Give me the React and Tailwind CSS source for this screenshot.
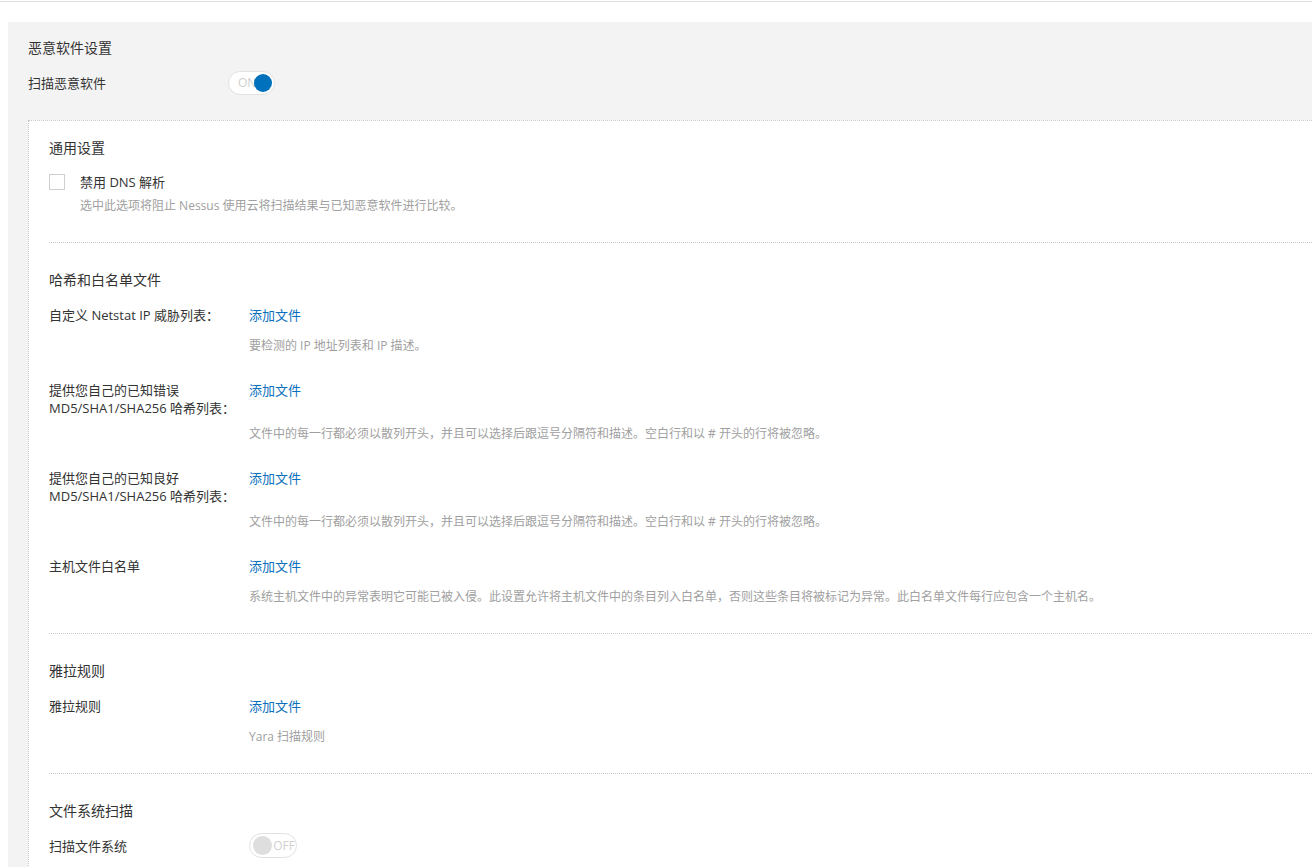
const FONT = { fontFamily: '"Open Sans", "Noto Sans CJK SC", sans-serif' };

function Toggle({ on }) {
  if (on) {
    return (
      <div className="relative w-[47px] h-[24px] rounded-full border border-[#e2e2e2] bg-white flex items-center">
        <span className="text-[12px] leading-none text-[#d0d0d0] pl-[9px]">ON</span>
        <span className="absolute right-[2px] top-[2px] w-[18px] h-[18px] rounded-full bg-[#0071bc]" />
      </div>
    );
  }
  return (
    <div className="relative w-[48px] h-[25px] rounded-full border border-[#e2e2e2] bg-white flex items-center justify-end">
      <span className="text-[12px] leading-none text-[#d0d0d0] pr-[1px]">OFF</span>
      <span className="absolute left-[3px] top-[2px] w-[19px] h-[19px] rounded-full bg-[#dedede]" />
    </div>
  );
}

function Row({ label, desc, descGap = 13 }) {
  return (
    <div className="flex">
      <div className="w-[200px] shrink-0 text-[13px] leading-[18px] text-[#333]">{label}</div>
      <div className="flex flex-col">
        <a className="text-[13px] leading-[18px] text-[#0a6fbd] cursor-pointer">添加文件</a>
        <p className="text-[12px] leading-[18px] text-[#a0a0a0]" style={{ marginTop: descGap }}>{desc}</p>
      </div>
    </div>
  );
}

const HASH_DESC = '文件中的每一行都必须以散列开头，并且可以选择后跟逗号分隔符和描述。空白行和以 # 开头的行将被忽略。';

export default function App() {
  return (
    <div className="w-[1312px] h-[867px] overflow-hidden bg-white" style={FONT}>
      <div className="h-[2px] border-b border-[#e0e0e0]" />
      <div className="mt-[20px] ml-[8px] bg-[#f3f3f3] pt-[17px] pl-[20px]">
        <h2 className="text-[14px] leading-[18px] text-[#333]">恶意软件设置</h2>
        <div className="flex items-center mt-[14px] h-[24px]">
          <span className="w-[200px] text-[13px] leading-[18px] text-[#333]">扫描恶意软件</span>
          <Toggle on />
        </div>

        <div className="mt-[25px] bg-white border-t border-l border-dotted border-[#c8c8c8] pl-[20px] pt-[18px] pb-[40px]">
          {/* general */}
          <h3 className="text-[14px] leading-[18px] text-[#333]">通用设置</h3>
          <div className="flex items-center mt-[16px]">
            <span className="w-[16px] h-[16px] border border-[#cfcfcf] bg-white" />
            <span className="ml-[15px] text-[13px] leading-[18px] text-[#333]">禁用 DNS 解析</span>
          </div>
          <p className="mt-[6px] ml-[31px] text-[12px] leading-[18px] text-[#a0a0a0]">选中此选项将阻止 Nessus 使用云将扫描结果与已知恶意软件进行比较。</p>
          <div className="mt-[27px] border-t border-dotted border-[#c8c8c8]" />

          {/* hashes */}
          <h3 className="mt-[28px] text-[14px] leading-[18px] text-[#333]">哈希和白名单文件</h3>
          <div className="mt-[17px] flex flex-col gap-[26px]">
            <Row label="自定义 Netstat IP 威胁列表：" desc="要检测的 IP 地址列表和 IP 描述。" />
            <Row label={<>提供您自己的已知错误<br />MD5/SHA1/SHA256 哈希列表：</>} desc={HASH_DESC} descGap={26} />
            <Row label={<>提供您自己的已知良好<br />MD5/SHA1/SHA256 哈希列表：</>} desc={HASH_DESC} descGap={26} />
            <Row label="主机文件白名单" desc="系统主机文件中的异常表明它可能已被入侵。此设置允许将主机文件中的条目列入白名单，否则这些条目将被标记为异常。此白名单文件每行应包含一个主机名。" />
          </div>
          <div className="mt-[27px] border-t border-dotted border-[#c8c8c8]" />

          {/* yara */}
          <h3 className="mt-[28px] text-[14px] leading-[18px] text-[#333]">雅拉规则</h3>
          <div className="mt-[17px]">
            <Row label="雅拉规则" desc="Yara 扫描规则" />
          </div>
          <div className="mt-[27px] border-t border-dotted border-[#c8c8c8]" />

          {/* file system */}
          <h3 className="mt-[28px] text-[14px] leading-[18px] text-[#333]">文件系统扫描</h3>
          <div className="mt-[13px] flex items-center">
            <span className="w-[200px] text-[13px] leading-[18px] text-[#333]">扫描文件系统</span>
            <Toggle />
          </div>
        </div>
      </div>
    </div>
  );
}
